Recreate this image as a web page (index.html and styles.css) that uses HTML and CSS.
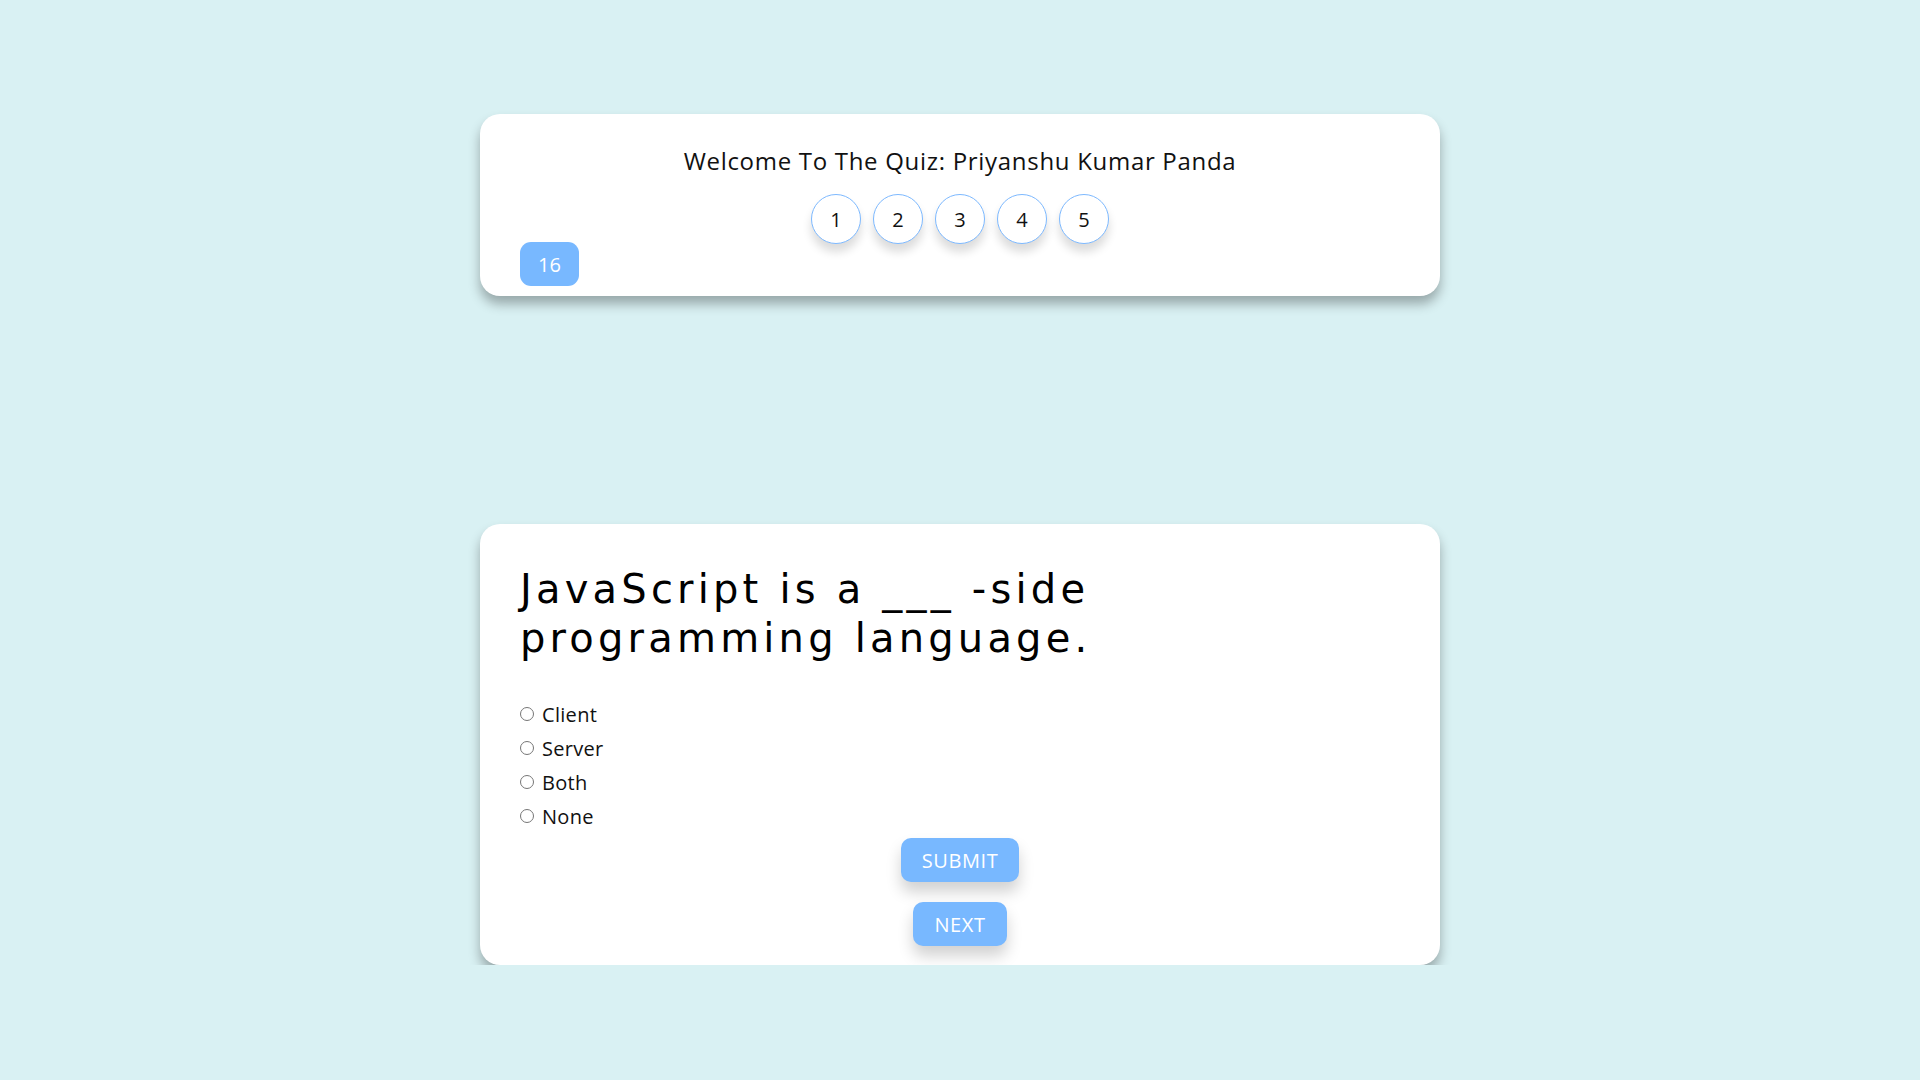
FILE: index.html
```html
<!DOCTYPE html>
<html lang="en">
<head>
<meta charset="utf-8">
<title>Quiz</title>
<link rel="stylesheet" href="styles.css">
</head>
<body>
<main class="page">
  <section class="card header-card">
    <h1 class="welcome">Welcome To The Quiz: Priyanshu Kumar Panda</h1>
    <div class="steps">
      <span class="step">1</span>
      <span class="step">2</span>
      <span class="step">3</span>
      <span class="step">4</span>
      <span class="step">5</span>
    </div>
    <div class="timer">16</div>
  </section>

  <section class="card question-card">
    <h2 class="question">JavaScript is a ___ -side programming language.</h2>
    <form class="options">
      <label class="option"><input type="radio" name="ans" value="client"><span>Client</span></label>
      <label class="option"><input type="radio" name="ans" value="server"><span>Server</span></label>
      <label class="option"><input type="radio" name="ans" value="both"><span>Both</span></label>
      <label class="option"><input type="radio" name="ans" value="none"><span>None</span></label>
    </form>
    <div class="actions">
      <button class="btn" type="button">SUBMIT</button>
      <button class="btn" type="button">NEXT</button>
    </div>
  </section>
</main>
</body>
</html>
```

FILE: styles.css
```css
* { box-sizing: border-box; }

html, body {
  margin: 0;
  padding: 0;
  background: #d9f1f3;
  font-family: "Open Sans", "Liberation Sans", sans-serif;
  color: #111;
}

.page {
  display: flex;
  flex-direction: column;
  align-items: center;
  gap: 228px;
  padding-top: 114px;
}

.card {
  width: 960px;
  background: #fff;
  border-radius: 20px;
  box-shadow: 0 8px 12px rgba(0, 0, 0, 0.3);
}

.header-card {
  height: 182px;
  padding: 32px 40px 10px;
  display: flex;
  flex-direction: column;
}

.welcome {
  margin: 0;
  font-size: 24px;
  line-height: 30px;
  font-weight: 400;
  letter-spacing: 0.7px;
  text-align: center;
  color: #111;
}

.steps {
  display: flex;
  justify-content: center;
  gap: 12px;
  margin-top: 18px;
}

.step {
  width: 50px;
  height: 50px;
  border-radius: 50%;
  border: 1px solid #7db9ff;
  background: #fff;
  display: flex;
  align-items: center;
  justify-content: center;
  font-size: 20px;
  color: #111;
  box-shadow: 0 8px 10px rgba(0, 0, 0, 0.14);
}

.timer {
  align-self: flex-start;
  margin-top: -2px;
  width: 59px;
  height: 44px;
  border-radius: 11px;
  background: #78b8ff;
  color: #fff;
  font-size: 20px;
  display: flex;
  align-items: center;
  justify-content: center;
}

.question-card {
  height: 441px;
  padding: 41px 40px 19px;
  display: flex;
  flex-direction: column;
}

.question {
  margin: 0;
  max-width: 680px;
  font-family: "DejaVu Sans", "Open Sans", sans-serif;
  font-size: 40px;
  line-height: 49px;
  font-weight: 400;
  letter-spacing: 4.2px;
  color: #000;
}

.options {
  margin-top: 34px;
  display: flex;
  flex-direction: column;
}

.option {
  display: flex;
  align-items: center;
  height: 34px;
  font-size: 20px;
  letter-spacing: 0.3px;
  color: #111;
}

.option input {
  width: 14px;
  height: 14px;
  margin: 0 8px 0 0;
}

.actions {
  margin-top: 5px;
  display: flex;
  flex-direction: column;
  align-items: center;
  gap: 20px;
}

.btn {
  height: 44px;
  padding: 0 21px;
  border: none;
  border-radius: 10px;
  background: #78b8ff;
  color: #fff;
  font-family: "Open Sans", "Liberation Sans", sans-serif;
  font-size: 20px;
  letter-spacing: 0.6px;
  box-shadow: 0 10px 15px rgba(0, 0, 0, 0.18);
  cursor: pointer;
}
```
